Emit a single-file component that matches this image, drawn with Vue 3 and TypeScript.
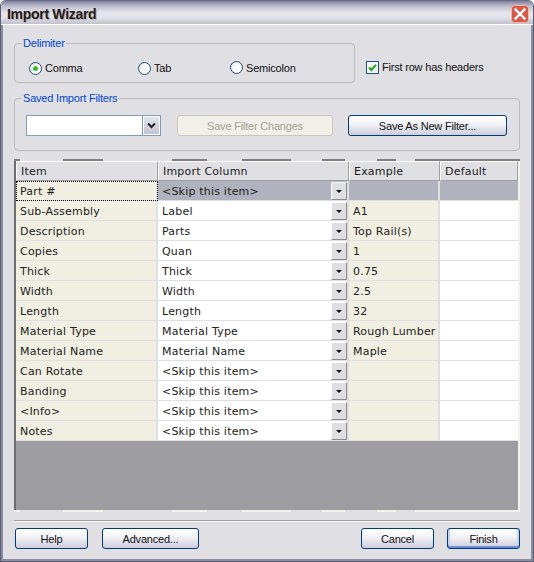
<script setup lang="ts">
interface Row { item: string; column: string; example: string }
const rows: Row[] = [
  { item: 'Part #', column: '<Skip this item>', example: '' },
  { item: 'Sub-Assembly', column: 'Label', example: 'A1' },
  { item: 'Description', column: 'Parts', example: 'Top Rail(s)' },
  { item: 'Copies', column: 'Quan', example: '1' },
  { item: 'Thick', column: 'Thick', example: '0.75' },
  { item: 'Width', column: 'Width', example: '2.5' },
  { item: 'Length', column: 'Length', example: '32' },
  { item: 'Material Type', column: 'Material Type', example: 'Rough Lumber' },
  { item: 'Material Name', column: 'Material Name', example: 'Maple' },
  { item: 'Can Rotate', column: '<Skip this item>', example: '' },
  { item: 'Banding', column: '<Skip this item>', example: '' },
  { item: '<Info>', column: '<Skip this item>', example: '' },
  { item: 'Notes', column: '<Skip this item>', example: '' },
]
// Segments along the grid's broken top and bottom edges.
const segments = [
  { start: 14, width: 6 }, { start: 63, width: 40 }, { start: 172, width: 35 },
  { start: 242, width: 49 }, { start: 322, width: 23 }, { start: 377, width: 19 }, { start: 415, width: 105 },
]
const edge = segments.map((s, i) => ({
  width: s.width + 'px',
  marginLeft: (i === 0 ? 0 : s.start - segments[i - 1].start - segments[i - 1].width) + 'px',
}))
</script>

<template>
  <div class="window">
    <header class="titlebar">
      <span class="title">Import Wizard</span>
      <svg class="close" width="18" height="18" viewBox="0 0 18 18">
        <rect x="0.5" y="0.5" width="17" height="17" rx="3" fill="#d9584a" stroke="#f0b8a8" />
        <path d="M4.5 4.5 L13.5 13.5 M13.5 4.5 L4.5 13.5" stroke="#fff" stroke-width="2.4" stroke-linecap="square" />
      </svg>
    </header>

    <main class="content">
      <div class="top-row">
        <section class="group delimiter">
          <span class="legend">Delimiter</span>
          <label class="radio comma"><i class="dot on"></i>Comma</label>
          <label class="radio tab"><i class="dot"></i>Tab</label>
          <label class="radio semi"><i class="dot"></i>Semicolon</label>
        </section>
        <label class="check">
          <svg width="13" height="13" viewBox="0 0 13 13">
            <rect x="0.5" y="0.5" width="12" height="12" fill="#f6f6f0" stroke="#1c5180" />
            <path d="M3 6.5 L5.4 9 L10 3.8" fill="none" stroke="#21a121" stroke-width="2" />
          </svg>
          First row has headers
        </label>
      </div>

      <section class="group saved">
        <span class="legend">Saved Import Filters</span>
        <div class="combo">
          <span class="combo-btn">
            <svg width="9" height="7" viewBox="0 0 9 7"><path d="M1 1.5 L4.5 5 L8 1.5" fill="none" stroke="#222" stroke-width="2" /></svg>
          </span>
        </div>
        <button class="btn disabled" type="button">Save Filter Changes</button>
        <button class="btn new-filter" type="button">Save As New Filter...</button>
      </section>

      <div class="edge top"><i v-for="(e, i) in edge" :key="i" :style="e"></i></div>
      <div class="grid">
        <div class="row head">
          <div class="cell">Item</div>
          <div class="cell">Import Column</div>
          <div class="cell">Example</div>
          <div class="cell">Default</div>
        </div>
        <div v-for="(r, i) in rows" :key="r.item" class="row" :class="{ selected: i === 0 }">
          <div class="cell item">{{ r.item }}</div>
          <div class="cell column">
            <span>{{ r.column }}</span>
            <span class="drop"><i></i></span>
          </div>
          <div class="cell example">{{ r.example }}</div>
          <div class="cell default"></div>
        </div>
      </div>
      <div class="edge bottom"><i v-for="(e, i) in edge" :key="i" :style="e"></i></div>

      <div class="rule"></div>

      <footer class="footer">
        <button class="btn help" type="button">Help</button>
        <button class="btn advanced" type="button">Advanced...</button>
        <button class="btn cancel" type="button">Cancel</button>
        <button class="btn finish" type="button">Finish</button>
      </footer>
    </main>
  </div>
</template>

<style>
html, body { margin: 0; background: #fff; }
</style>

<style scoped>
.window {
  width: 534px;
  height: 562px;
  box-sizing: border-box;
  display: flex;
  flex-direction: column;
  background: #e0dfe3;
  font-family: "Liberation Sans", Arial, sans-serif;
  font-size: 11px;
  letter-spacing: -0.2px;
  color: #111;
  border-radius: 6px 6px 0 0;
  overflow: hidden;
  border: 1px solid #5c5c74;
  border-top: 0;
}
.titlebar {
  height: 25px;
  flex: none;
  box-sizing: border-box;
  display: flex;
  align-items: center;
  justify-content: space-between;
  padding: 3px 4px 0 6px;
  background: linear-gradient(#5f5f82 0, #8f8fa8 2px, #c4c4d4 7px, #e6e6ee 13px, #e2e2ea 18px, #c4c4d0 23px);
  border-bottom: 1px solid #fff;
}
.title {
  font-size: 14px;
  letter-spacing: -0.3px;
  font-weight: bold;
  color: #241a14;
  text-shadow: 1px 1px 1px #a8a8b8;
}
.content {
  flex: 1;
  min-height: 0;
  padding: 0 12px 0 11px;
  border-left: 2px solid #8c8ca4;
  border-right: 2px solid #8c8ca4;
  border-bottom: 2px solid #8c8ca4;
  display: flex;
  flex-direction: column;
}
.top-row {
  display: flex;
  align-items: center;
  margin-top: 18px;
}
.group {
  position: relative;
  box-sizing: border-box;
  border: 1px solid #bcbbc0;
  border-radius: 4px;
  display: flex;
}
.legend {
  position: absolute;
  left: 7px;
  top: -8px;
  padding: 0 1px;
  background: #e0dfe3;
  color: #0046d5;
  line-height: 14px;
}
.delimiter {
  width: 341px;
  height: 40px;
  flex: none;
  align-items: center;
  padding: 10px 0 0 14px;
}
.radio {
  display: flex;
  align-items: center;
  gap: 3px;
  line-height: 14px;
}
.comma { width: 109px; }
.tab { width: 92px; }
.semi { margin-top: -1px; }
.dot {
  width: 11px;
  height: 11px;
  border: 1px solid #1c5180;
  border-radius: 50%;
  background: radial-gradient(circle at 65% 65%, #fff 35%, #d8d8d0 100%);
  position: relative;
  flex: none;
}
.dot.on::after {
  content: "";
  position: absolute;
  left: 3px;
  top: 3px;
  width: 5px;
  height: 5px;
  border-radius: 50%;
  background: #3cbc3c;
}
.check {
  display: flex;
  align-items: center;
  gap: 3px;
  margin: 8px 0 0 11px;
  line-height: 14px;
}
.saved {
  height: 53px;
  margin-top: 15px;
  width: 506px;
  flex: none;
  align-items: flex-start;
  padding: 16px 0 0 11px;
}
.combo {
  width: 135px;
  height: 21px;
  box-sizing: border-box;
  border: 1px solid #7f9db9;
  background: #fff;
  display: flex;
  justify-content: flex-end;
}
.combo-btn {
  width: 17px;
  background: linear-gradient(#e4e4ec, #c4c4d4);
  border: 1px solid #fff;
  box-shadow: -1px 0 0 #7f9db9;
  box-sizing: border-box;
  display: flex;
  align-items: center;
  justify-content: center;
}
.btn {
  font: inherit;
  letter-spacing: inherit;
  color: #111;
  box-sizing: border-box;
  height: 21px;
  padding: 0;
  flex: none;
  border: 1px solid #003c74;
  border-radius: 3px;
  background: linear-gradient(#fff 0, #f4f4f8 40%, #cdcdde 100%);
}
.disabled {
  width: 156px;
  margin-left: 16px;
  background: #f0efe8;
  border-color: #c9c8bd;
  color: #a3a294;
}
.new-filter { width: 159px; margin-left: 15px; }
.edge {
  height: 2px;
  flex: none;
  display: flex;
  width: 506px;
}
.edge.top { margin-top: 8px; }
.edge.top i { background: #808080; height: 2px; display: block; }
.edge.bottom i { background: #f4f3ea; height: 2px; display: block; }
.grid {
  width: 506px;
  height: 349px;
  flex: none;
  box-sizing: border-box;
  background: #9d9ca1;
  border-left: 2px solid #6f6f6a;
  border-right: 2px solid #f4f3ea;
  font-family: "DejaVu Sans", Verdana, sans-serif;
  font-size: 11px;
  letter-spacing: 0.2px;
  color: #222;
  overflow: hidden;
}
.row {
  display: grid;
  grid-template-columns: 142px 191px 91px 1fr;
  height: 20px;
}
.cell {
  box-sizing: border-box;
  height: 20px;
  line-height: 21px;
  padding-left: 4px;
  border-right: 2px solid #e0dfe3;
  border-bottom: 1px solid #e0dfe3;
  background: #fff;
  white-space: nowrap;
  overflow: hidden;
}
.cell:last-child { border-right: 0; }
.item, .example { background: #f0efe2; }
.column {
  display: flex;
  justify-content: space-between;
  padding-right: 0;
}
.head .cell {
  background: #e0dfe3;
  line-height: 20px;
  padding-left: 4px;
  border-top: 1px solid #fff;
  border-left: 1px solid #fff;
  border-right: 1px solid #a0a0a0;
  border-bottom: 1px solid #a0a0a0;
}
.selected .cell { background: #b0b2bd; }
.selected .item {
  background: #f0efe2;
  outline: 1px dotted #000;
  outline-offset: -1px;
}
.drop {
  width: 16px;
  height: 18px;
  margin-top: 1px;
  box-sizing: border-box;
  background: #e0dfe3;
  border: 1px solid #fff;
  border-right-color: #8a8a8a;
  border-bottom-color: #8a8a8a;
  display: flex;
  align-items: center;
  justify-content: center;
  flex: none;
}
.drop i {
  width: 0;
  height: 0;
  border-left: 3px solid transparent;
  border-right: 3px solid transparent;
  border-top: 3px solid #111;
}
.rule {
  height: 1px;
  flex: none;
  width: 506px;
  margin-top: 8px;
  background: #9a9aa0;
  border-bottom: 1px solid #fff;
}
.footer {
  display: flex;
  margin: 6px 0 0 1px;
}
.help { width: 73px; }
.advanced { width: 97px; margin-left: 14px; }
.cancel { width: 73px; margin-left: 162px; }
.finish {
  width: 73px;
  margin-left: 13px;
  box-shadow: inset 0 -2px 0 #6e8fd8, inset 2px 0 0 #c6d4f2, inset -2px 0 0 #c6d4f2;
}
</style>
